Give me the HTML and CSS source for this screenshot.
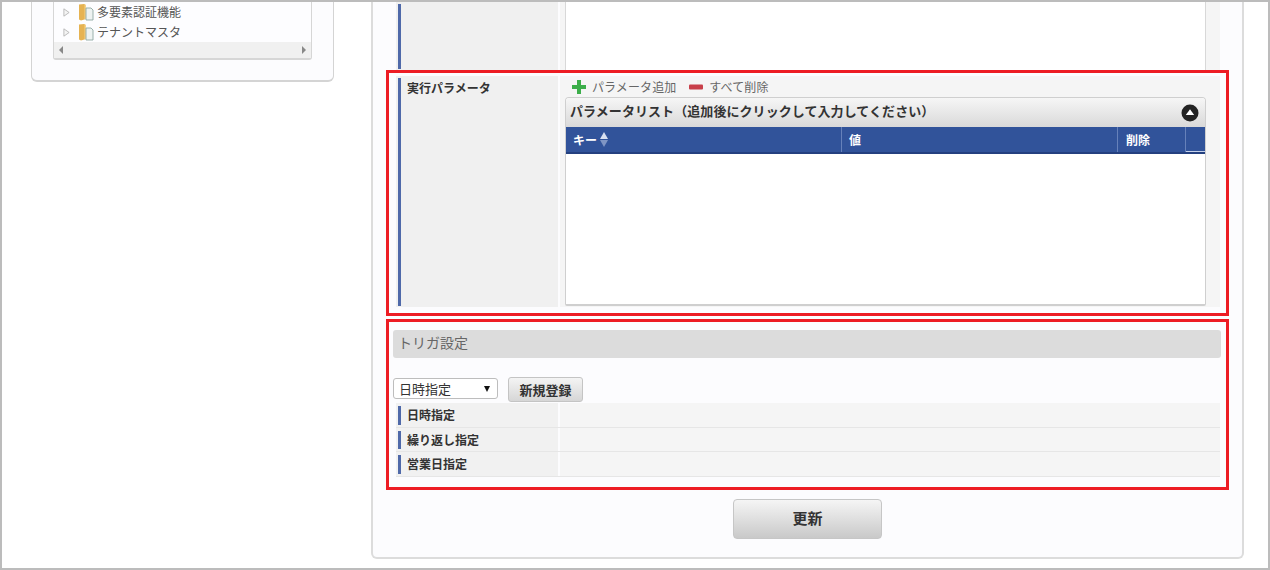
FILE: index.html
```html
<!DOCTYPE html>
<html lang="ja">
<head>
<meta charset="utf-8">
<title>ジョブ設定</title>
<link rel="stylesheet" href="styles.css">
</head>
<body>
<div class="frame">
  <aside class="side">
    <div class="tree">
      <div class="tree-rows">
        <div class="tree-row">
          <svg class="arrow" viewBox="0 0 8 10"><path d="M1 .8 7 5 1 9.2Z" fill="#f4f4f4" stroke="#b5b5b5"/></svg>
          <svg class="folder" viewBox="0 0 16 18"><path d="M1 1.5 6 1l2 1v14l-5 1.5-2-1Z" fill="#e6b352"/><path d="M6.5 2H8v14H6.5Z" fill="#f3d288"/><path d="M8 5h5l2 2v10H8Z" fill="#eef3f2" stroke="#8fa8a3" stroke-width=".9"/></svg>
          <span class="tree-text">多要素認証機能</span>
        </div>
        <div class="tree-row">
          <svg class="arrow" viewBox="0 0 8 10"><path d="M1 .8 7 5 1 9.2Z" fill="#f4f4f4" stroke="#b5b5b5"/></svg>
          <svg class="folder" viewBox="0 0 16 18"><path d="M1 1.5 6 1l2 1v14l-5 1.5-2-1Z" fill="#e6b352"/><path d="M6.5 2H8v14H6.5Z" fill="#f3d288"/><path d="M8 5h5l2 2v10H8Z" fill="#eef3f2" stroke="#8fa8a3" stroke-width=".9"/></svg>
          <span class="tree-text">テナントマスタ</span>
        </div>
      </div>
      <div class="hscroll">
        <i class="sc-left"></i>
        <i class="sc-right"></i>
      </div>
    </div>
  </aside>

  <main class="panel">
    <div class="form-row first">
      <div class="label-cell"><div class="label-bar"></div></div>
      <div class="value-cell"><div class="blank-box"></div></div>
    </div>

    <div class="form-row params">
      <div class="label-cell"><div class="label-bar"><b>実行パラメータ</b></div></div>
      <div class="value-cell">
        <div class="tools">
          <span class="tool">
            <svg class="tool-icon" viewBox="0 0 14 14"><path d="M5 0h4v5h5v4H9v5H5V9H0V5h5Z" fill="#3cae4a"/></svg>
            パラメータ追加
          </span>
          <span class="tool">
            <svg class="tool-icon" viewBox="0 0 14 14"><rect x="0" y="4.5" width="14" height="5" rx="1" fill="#c8404a"/></svg>
            すべて削除
          </span>
        </div>
        <div class="grid-box">
          <div class="grid-title">
            <span>パラメータリスト（追加後にクリックして入力してください）</span>
            <svg class="collapse" viewBox="0 0 18 18"><circle cx="9" cy="9" r="8.5" fill="#222"/><path d="M9 5.2 13.2 11H4.8Z" fill="#fff"/></svg>
          </div>
          <div class="grid-head">
            <div class="col col-key">キー<span class="sort"><i class="up"></i><i class="down"></i></span></div>
            <div class="col col-val">値</div>
            <div class="col col-del">削除</div>
            <div class="col col-end"></div>
          </div>
          <div class="grid-body"></div>
        </div>
      </div>
    </div>

    <section class="trigger">
      <h2 class="section-title">トリガ設定</h2>
      <div class="trigger-tools">
        <div class="select"><span>日時指定</span><i class="select-arrow"></i></div>
        <button class="btn" type="button">新規登録</button>
      </div>
      <div class="trigger-row"><div class="label-cell"><div class="label-bar"><b>日時指定</b></div></div><div class="value-cell"></div></div>
      <div class="trigger-row"><div class="label-cell"><div class="label-bar"><b>繰り返し指定</b></div></div><div class="value-cell"></div></div>
      <div class="trigger-row"><div class="label-cell"><div class="label-bar"><b>営業日指定</b></div></div><div class="value-cell"></div></div>
    </section>

    <div class="actions"><button class="btn-main" type="button">更新</button></div>
  </main>

  <div class="mark mark-a"></div>
  <div class="mark mark-b"></div>
</div>
</body>
</html>
```

FILE: styles.css
```css
* { box-sizing: border-box; }
html, body { margin: 0; padding: 0; background: #fff; }
body { font-family: "Noto Sans CJK JP", "Noto Sans", sans-serif; color: #333; }
.frame {
  position: relative;
  display: flex;
  align-items: flex-start;
  width: 1270px;
  height: 570px;
  border: 2px solid #bcbcbc;
  overflow: hidden;
  background: #fff;
}

/* left */
.side {
  width: 303px;
  height: 80px;
  margin-left: 29px;
  padding: 0 21px 0 21px;
  background: #fcfcfe;
  border: 1px solid #d4d4d4;
  border-top: 0;
  border-bottom-width: 2px;
  border-radius: 0 0 6px 6px;
}
.tree {
  width: 259px;
  height: 58px;
  background: #fdfdff;
  border: 1px solid #d6d6d6;
  border-top: 0;
  border-bottom-width: 2px;
  border-radius: 0 0 3px 3px;
  display: flex;
  flex-direction: column;
  justify-content: flex-end;
}
.tree-rows { padding-left: 9px; }
.tree-row {
  display: flex;
  align-items: center;
  height: 20px;
  font-size: 12px;
  color: #555;
}
.tree-text { padding-bottom: 2px; margin-left: 1px; }
.arrow { width: 7px; height: 9px; margin-right: 9px; }
.folder { width: 16px; height: 18px; margin-right: 2px; margin-left: -1px; }
.hscroll {
  height: 17px;
  background: #f0f0f0;
  display: flex;
  align-items: center;
  justify-content: space-between;
  padding: 0 5px;
}
.sc-left, .sc-right { width: 0; height: 0; border-top: 4px solid transparent; border-bottom: 4px solid transparent; }
.sc-left { border-right: 4px solid #888; }
.sc-right { border-left: 4px solid #888; }

/* main panel */
.panel {
  width: 873px;
  height: 557px;
  margin-left: 37px;
  padding: 0 21px 0 20px;
  background: #fcfcfe;
  border: 2px solid #dcdcdc;
  border-top: 0;
  border-radius: 0 0 6px 6px;
}
.form-row {
  display: flex;
  gap: 2px;
  margin: 0 1px 0 3px;
}
.form-row.first { height: 68px; margin-bottom: 6px; }
.form-row.params { height: 231px; }
.label-cell {
  width: 162px;
  flex: none;
  background: #f0f0f0;
  padding: 2px 0 1px 2px;
}
.label-bar {
  height: 100%;
  border-left: 3px solid #4f69a9;
  padding-left: 6px;
  font-size: 12px;
  line-height: 19px;
}
.label-bar b { color: #333; font-weight: 700; }
.value-cell { flex: 1; background: #f5f5f5; padding: 0 14px 0 5px; }
.blank-box {
  height: 100%;
  background: #fff;
  border-left: 1px solid #d8d8d8;
  border-right: 1px solid #d8d8d8;
}
.tools {
  display: flex;
  gap: 13px;
  height: 21px;
  padding: 3px 0 0 7px;
  font-size: 12px;
  line-height: 16px;
  color: #666;
  letter-spacing: .1px;
}
.tool { display: flex; align-items: center; gap: 6px; height: 16px; }
.tool-icon { width: 14px; height: 14px; }
.grid-box {
  height: 209px;
  display: flex;
  flex-direction: column;
  background: #fff;
  border: 1px solid #cfcfcf;
  border-bottom-width: 2px;
  border-radius: 4px 4px 2px 2px;
}
.grid-title {
  height: 29px;
  flex: none;
  display: flex;
  align-items: center;
  justify-content: space-between;
  padding: 0 6px 4px 4px;
  font-size: 13px;
  font-weight: 700;
  color: #333;
  letter-spacing: .07px;
  background: linear-gradient(#f6f6f6, #d9d9d9);
  border-radius: 3px 3px 0 0;
}
.collapse { width: 18px; height: 18px; margin-top: 4px; }
.grid-head {
  height: 27px;
  flex: none;
  display: flex;
  background: #31539a;
  border-bottom: 2px solid #24407f;
  color: #fff;
  font-size: 12px;
  font-weight: 700;
  line-height: 25px;
}
.col { border-right: 1px solid #6681ba; padding-left: 7px; height: 25px; }
.col-key { width: 276px; display: flex; align-items: center; gap: 2px; }
.col-val { width: 276px; }
.col-del { width: 68px; padding-left: 8px; }
.col-end { flex: 1; border-right: 0; border-bottom: 1px solid #c5d1ea; padding: 0; }
.sort { display: flex; flex-direction: column; gap: 1px; margin-left: 1px; }
.sort i { display: block; width: 0; height: 0; border-left: 4px solid transparent; border-right: 4px solid transparent; }
.sort .up { border-bottom: 7px solid #d8e0f0; }
.sort .down { border-top: 7px solid #7f95c4; }
.grid-body { flex: 1; }

/* trigger */
.trigger { margin-top: 23px; }
.section-title {
  height: 28px;
  margin: 0;
  padding-left: 5px;
  font-size: 14px;
  font-weight: 400;
  line-height: 25px;
  color: #666;
  background: #dcdcdc;
  border-radius: 3px;
}
.trigger-tools {
  display: flex;
  align-items: flex-start;
  gap: 10px;
  height: 45px;
  padding-top: 19px;
}
.select {
  width: 105px;
  height: 21px;
  margin-top: 1px;
  display: flex;
  align-items: center;
  justify-content: space-between;
  padding: 0 7px 0 5px;
  background: #fff;
  border: 1px solid #bdbdbd;
  border-radius: 3px;
  font-size: 13px;
  color: #333;
}
.select-arrow { width: 0; height: 0; border-left: 3px solid transparent; border-right: 3px solid transparent; border-top: 6px solid #111; }
.btn {
  width: 75px;
  height: 25px;
  padding: 0;
  font: 700 13px "Noto Sans CJK JP", sans-serif;
  color: #333;
  background: linear-gradient(#f4f4f4, #d6d6d6);
  border: 1px solid #c4c4c4;
  border-radius: 3px;
}
.trigger-row {
  display: flex;
  gap: 2px;
  height: 24.5px;
  margin: 0 1px 0 3px;
  border-bottom: 1px solid #e6e6e6;
}
.trigger-row .label-cell { background: #f1f1f1; padding: 3px 0 2px 2px; }
.trigger-row .label-bar { line-height: 17px; }
.trigger-row .value-cell { background: #f5f5f5; padding: 0; }

/* actions */
.actions { display: flex; justify-content: center; margin-top: 22px; }
.btn-main {
  width: 149px;
  height: 40px;
  margin-left: 1px;
  padding: 0 0 2px;
  font: 700 15px "Noto Sans CJK JP", sans-serif;
  color: #333;
  background: linear-gradient(#f5f5f5, #c9c9c9);
  border: 1px solid #c6c6c6;
  border-radius: 4px;
}

/* annotation boxes */
.mark { position: absolute; border: 3px solid #ed1c24; pointer-events: none; }
.mark-a { left: 384px; top: 68px; width: 843px; height: 246px; }
.mark-b { left: 384px; top: 317px; width: 843px; height: 171px; }
```
